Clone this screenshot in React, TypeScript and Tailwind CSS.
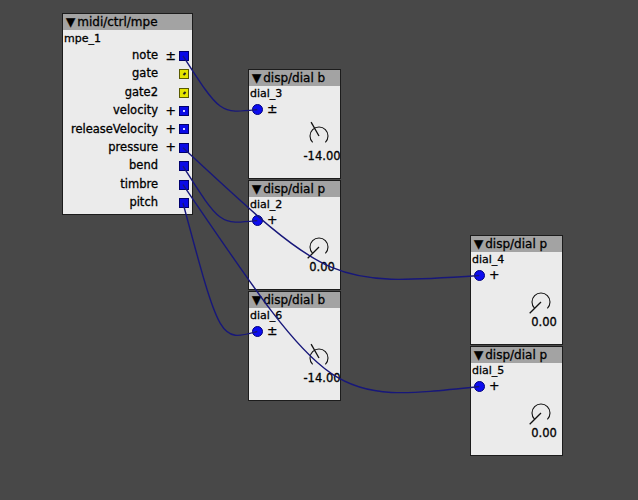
import React from 'react';

type Kind = 'frac' | 'fracDot' | 'bool';

const outlets: { name: string; sym: string; kind: Kind }[] = [
  { name: 'note', sym: '±', kind: 'frac' },
  { name: 'gate', sym: '', kind: 'bool' },
  { name: 'gate2', sym: '', kind: 'bool' },
  { name: 'velocity', sym: '+', kind: 'fracDot' },
  { name: 'releaseVelocity', sym: '+', kind: 'fracDot' },
  { name: 'pressure', sym: '+', kind: 'frac' },
  { name: 'bend', sym: '', kind: 'frac' },
  { name: 'timbre', sym: '', kind: 'frac' },
  { name: 'pitch', sym: '', kind: 'frac' },
];

type Dial = { id: string; type: 'b' | 'p'; sym: string; value: string; left: number; top: number };

const dials: Dial[] = [
  { id: 'dial_3', type: 'b', sym: '±', value: '-14.00', left: 248, top: 69 },
  { id: 'dial_2', type: 'p', sym: '+', value: '0.00', left: 248, top: 180 },
  { id: 'dial_6', type: 'b', sym: '±', value: '-14.00', left: 248, top: 291 },
  { id: 'dial_4', type: 'p', sym: '+', value: '0.00', left: 470, top: 235 },
  { id: 'dial_5', type: 'p', sym: '+', value: '0.00', left: 470, top: 346 },
];

// outlet index -> dial id
const nets: [number, string][] = [
  [0, 'dial_3'],
  [5, 'dial_4'],
  [6, 'dial_2'],
  [7, 'dial_5'],
  [8, 'dial_6'],
];

const outletX = 183;
const outletY = (i: number) => 55.8 + 18.4 * i;

function wirePath(x1: number, y1: number, x2: number, y2: number) {
  const cx = (x1 + x2) / 2;
  const cy = Math.max(y1, y2) + Math.abs(y2 - y1) * 0.08;
  return `M ${x1} ${y1} C ${cx} ${cy}, ${cx} ${cy}, ${x2} ${y2}`;
}

function Outlet({ kind }: { kind: Kind }) {
  if (kind === 'bool') {
    return (
      <div className="w-[10px] h-[10px] bg-[#e4e400] border border-[#5a5a00] flex items-center justify-center">
        <div className="w-[3px] h-[2px] bg-[#222] -rotate-45" />
      </div>
    );
  }
  return (
    <div className="w-[10px] h-[10px] bg-[#0a0ae6] border border-[#00006e] flex items-center justify-center">
      {kind === 'fracDot' && <div className="w-[2px] h-[2px] bg-[#d0d0ff]" />}
    </div>
  );
}

function TitleBar({ text }: { text: string }) {
  return (
    <div className="h-4 bg-[#a3a3a3] flex items-center pl-[3px] text-[12px] leading-none text-black whitespace-nowrap">
      <span>▼</span>
      <span className="ml-[2px]">{text}</span>
    </div>
  );
}

function MpeObject() {
  return (
    <div className="absolute left-[62px] top-[13px] w-[131px] h-[202px] border border-[#1c1c1c] bg-[#ebebeb] overflow-hidden">
      <TitleBar text="midi/ctrl/mpe" />
      <div className="h-[16.6px] flex items-center pl-[1px] text-[11px] leading-none">mpe_1</div>
      {outlets.map((o) => (
        <div key={o.name} className="h-[18.4px] flex items-center justify-end pr-[3px] text-[11.5px] leading-none">
          <span>{o.name}</span>
          <span className="w-[21px] text-right pr-[3px] text-[12.5px]">{o.sym}</span>
          <Outlet kind={o.kind} />
        </div>
      ))}
    </div>
  );
}

function Knob({ type }: { type: 'b' | 'p' }) {
  const needle = type === 'b' ? { x: 10.1, y: 4.1 } : { x: 6.7, y: 29.3 };
  return (
    <svg width="36" height="36" viewBox="0 0 36 36" className="block">
      <path d="M 11.64 24.36 A 9 9 0 1 1 24.36 24.36" fill="none" stroke="#111" strokeWidth="1.1" />
      <line x1="18" y1="18" x2={needle.x} y2={needle.y} stroke="#111" strokeWidth="1.3" />
    </svg>
  );
}

function DialObject({ d }: { d: Dial }) {
  return (
    <div
      className="absolute w-[93px] h-[110px] border border-[#1c1c1c] bg-[#ebebeb] overflow-hidden"
      style={{ left: d.left, top: d.top }}
    >
      <TitleBar text={`disp/dial ${d.type}`} />
      <div className="h-[15px] flex items-center pl-[1px] text-[11px] leading-none">{d.id}</div>
      <div className="h-[17px] flex items-center text-[12.5px] leading-none">
        <div className="ml-[3px] w-[11px] h-[11px] rounded-full bg-[#0c0cf0] border border-[#000080]" />
        <span className="ml-[4px]">{d.sym}</span>
      </div>
      <div className="ml-[52px]">
        <Knob type={d.type} />
      </div>
      <div className="ml-[40px] w-[66px] -mt-[4px] text-center text-[11.5px] leading-[13px] whitespace-nowrap">{d.value}</div>
    </div>
  );
}

export default function App() {
  return (
    <div className="relative w-[638px] h-[500px] bg-[#484848] overflow-hidden font-['DejaVu_Sans',sans-serif] text-black [-webkit-text-stroke:0.3px_black]">
      <MpeObject />
      {dials.map((d) => (
        <DialObject key={d.id} d={d} />
      ))}
      <svg className="absolute inset-0 pointer-events-none" width="638" height="500">
        {nets.map(([i, id]) => {
          const d = dials.find((x) => x.id === id)!;
          return (
            <path
              key={id}
              d={wirePath(outletX, outletY(i), d.left + 9.3, d.top + 40.5)}
              fill="none"
              stroke="#17177a"
              strokeWidth="1.4"
            />
          );
        })}
      </svg>
    </div>
  );
}
